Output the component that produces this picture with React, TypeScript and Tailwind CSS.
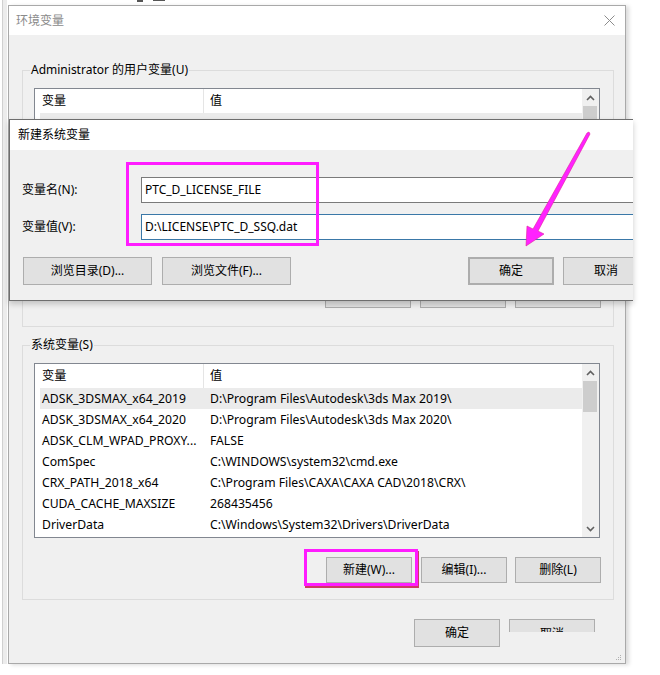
const sysRows = [
  ['ADSK_3DSMAX_x64_2019', 'D:\\Program Files\\Autodesk\\3ds Max 2019\\'],
  ['ADSK_3DSMAX_x64_2020', 'D:\\Program Files\\Autodesk\\3ds Max 2020\\'],
  ['ADSK_CLM_WPAD_PROXY...', 'FALSE'],
  ['ComSpec', 'C:\\WINDOWS\\system32\\cmd.exe'],
  ['CRX_PATH_2018_x64', 'C:\\Program Files\\CAXA\\CAXA CAD\\2018\\CRX\\'],
  ['CUDA_CACHE_MAXSIZE', '268435456'],
  ['DriverData', 'C:\\Windows\\System32\\Drivers\\DriverData'],
]

const Btn = ({ children, className = '' }: { children: React.ReactNode; className?: string }) => (
  <div className={'flex h-[26px] w-[86px] shrink-0 items-center justify-center border border-[#adadad] bg-[#e1e1e1] text-black ' + className}>
    {children}
  </div>
)

const Chevron = ({ down = false }: { down?: boolean }) => (
  <svg width="9" height="6" viewBox="0 0 9 6" className={down ? 'rotate-180' : ''}>
    <path d="M1 5 L4.5 1.5 L8 5" fill="none" stroke="#606060" strokeWidth="1.6" />
  </svg>
)

const ScrollBar = ({ thumbH }: { thumbH: number }) => (
  <div className="flex w-[17px] flex-col bg-[#f0f0f0]">
    <div className="flex h-[17px] items-center justify-center">
      <Chevron />
    </div>
    <div className="ml-[1px] mr-[2px] bg-[#cdcdcd]" style={{ height: thumbH }} />
    <div className="flex-1" />
    <div className="flex h-[17px] items-center justify-center">
      <Chevron down />
    </div>
  </div>
)

const ListHeader = () => (
  <div className="flex h-[24px] items-center">
    <div className="w-[168px] pl-[7px]">变量</div>
    <div className="h-full border-l border-[#e5e5e5] pl-[6px] leading-[24px]">值</div>
  </div>
)

export default function App() {
  return (
    <div className="relative h-[675px] w-[660px] overflow-hidden bg-white font-['Noto_Sans','Noto_Sans_CJK_SC',sans-serif] text-[12px] leading-[16px] text-black">
      {/* bits of the window behind */}
      <div className="absolute left-[137px] top-0 h-[2px] w-[6px] bg-[#555]" />
      <div className="absolute left-[153px] top-0 h-[1px] w-[12px] bg-[#555]" />

      <div className="flex items-start pl-[2px]">
        <div className="h-[664px] w-[5px] border-l border-[#d0d0d0] bg-[#ececec]" />
        <div className="ml-[1px] mt-[5px] flex h-[659px] w-[618px] flex-col border border-[#a9a9a9] bg-[#f0f0f0] shadow-[3px_1px_4px_rgba(0,0,0,0.14)]">
          {/* title bar */}
          <div className="flex h-[29px] items-center justify-between bg-white pl-[7px] pr-[10px]">
            <span className="text-[#8a8a8a]">环境变量</span>
            <svg width="11" height="11" viewBox="0 0 11 11">
              <path d="M0.5 0.5 L10.5 10.5 M10.5 0.5 L0.5 10.5" stroke="#8c8c8c" strokeWidth="1" />
            </svg>
          </div>

          <div className="flex flex-1 flex-col pl-[13px]">
            {/* user variables */}
            <fieldset className="mt-[27px] w-[592px] border border-[#dcdcdc] pb-[18px] pl-[11px] pr-[12px] pt-[10px]">
              <legend className="-ml-[4px] px-[1px] leading-[16px]">Administrator 的用户变量(U)</legend>
              <div className="flex h-[184px] w-[566px] border border-[#828790] bg-white">
                <div className="flex flex-1 flex-col">
                  <ListHeader />
                  <div className="ml-[5px] h-[21px] bg-[#ebebeb]" />
                </div>
                <ScrollBar thumbH={40} />
              </div>
              <div className="mt-[10px] flex justify-end gap-[9px]">
                <Btn>新建(U)...</Btn>
                <Btn>编辑(E)...</Btn>
                <Btn>删除(D)</Btn>
              </div>
            </fieldset>

            {/* system variables */}
            <fieldset className="mt-[10px] w-[592px] border border-[#dcdcdc] pb-[16px] pl-[11px] pr-[12px] pt-[10px]">
              <legend className="-ml-[4px] px-[1px] leading-[16px]">系统变量(S)</legend>
              <div className="flex h-[175px] w-[566px] border border-[#828790] bg-white text-[12.2px]">
                <div className="flex flex-1 flex-col">
                  <ListHeader />
                  {sysRows.map(([k, v], i) => (
                    <div key={k} className={'ml-[5px] flex h-[21px] items-center ' + (i === 0 ? 'bg-[#ebebeb]' : '')}>
                      <div className="w-[163px] shrink-0 whitespace-nowrap pl-[2px]">{k}</div>
                      <div className="whitespace-nowrap pl-[7px]">{v}</div>
                    </div>
                  ))}
                </div>
                <ScrollBar thumbH={31} />
              </div>
              <div className="mt-[19px] flex justify-end gap-[9px]">
                <Btn>新建(W)...</Btn>
                <Btn>编辑(I)...</Btn>
                <Btn className="-ml-[1px]">删除(L)</Btn>
              </div>
            </fieldset>

            {/* OK / Cancel */}
            <div className="mt-[19px] flex justify-end gap-[9px] pr-[30px]">
              <Btn className="h-[28px]">确定</Btn>
              <div className="h-[13px] w-[86px] overflow-hidden border-x border-t border-[#adadad] bg-[#e1e1e1] pt-[6px] text-center">取消</div>
            </div>
            <div className="flex-1" />
            <svg width="6" height="6" viewBox="0 0 6 6" className="mb-[2px] mr-[3px] self-end">
              <rect x="4" y="0" width="1" height="1" fill="#b0b0b0" />
              <rect x="2" y="2" width="1" height="1" fill="#b0b0b0" />
              <rect x="4" y="2" width="1" height="1" fill="#b0b0b0" />
              <rect x="0" y="4" width="1" height="1" fill="#b0b0b0" />
              <rect x="2" y="4" width="1" height="1" fill="#b0b0b0" />
              <rect x="4" y="4" width="1" height="1" fill="#b0b0b0" />
            </svg>
          </div>
        </div>
      </div>

      {/* new system variable dialog */}
      <div className="absolute left-[9px] top-[119px] flex h-[182px] w-[624px] flex-col overflow-hidden border-y border-l border-[#6e6e6e] bg-[#f0f0f0] shadow-[0_3px_6px_rgba(0,0,0,0.2)]">
        <div className="flex h-[30px] items-center bg-white pl-[8px]">新建系统变量</div>
        <div className="flex flex-col pl-[12px]">
          <div className="mt-[27px] flex items-center">
            <div className="w-[119px] shrink-0">变量名(N):</div>
            <div className="flex h-[26px] w-[520px] shrink-0 items-center border border-[#7a7a7a] bg-white pl-[3px]">PTC_D_LICENSE_FILE</div>
          </div>
          <div className="mt-[11px] flex items-center">
            <div className="w-[119px] shrink-0">变量值(V):</div>
            <div className="flex h-[26px] w-[520px] shrink-0 items-center border border-[#3a78a8] bg-white pl-[3px]">D:\LICENSE\PTC_D_SSQ.dat</div>
          </div>
          <div className="mt-[17px] flex items-center">
            <Btn className="ml-[1px] h-[28px] w-[129px]">浏览目录(D)...</Btn>
            <Btn className="ml-[10px] h-[28px] w-[129px]">浏览文件(F)...</Btn>
            <Btn className="ml-[177px] h-[28px] w-[85px] border-2 border-[#2c6ea8]">确定</Btn>
            <Btn className="ml-[9px] h-[28px]">取消</Btn>
          </div>
        </div>
      </div>

      {/* annotations */}
      <div className="absolute left-[126px] top-[162px] h-[84px] w-[193px] border-[3px] border-[#ff1cff]" />
      <div className="absolute left-[304px] top-[549px] h-[37px] w-[114px] border-[3px] border-[#ff1cff] shadow-[1px_2px_0_#cc3b62]" />
      <svg className="pointer-events-none absolute left-0 top-0" width="660" height="675">
        <polygon
          points="589,132 590,134 538,231 544,234 526,246 527,226 533,229 587,133"
          fill="#ff22ff"
          stroke="#e0209a"
          strokeWidth="0.6"
        />
      </svg>
    </div>
  )
}
